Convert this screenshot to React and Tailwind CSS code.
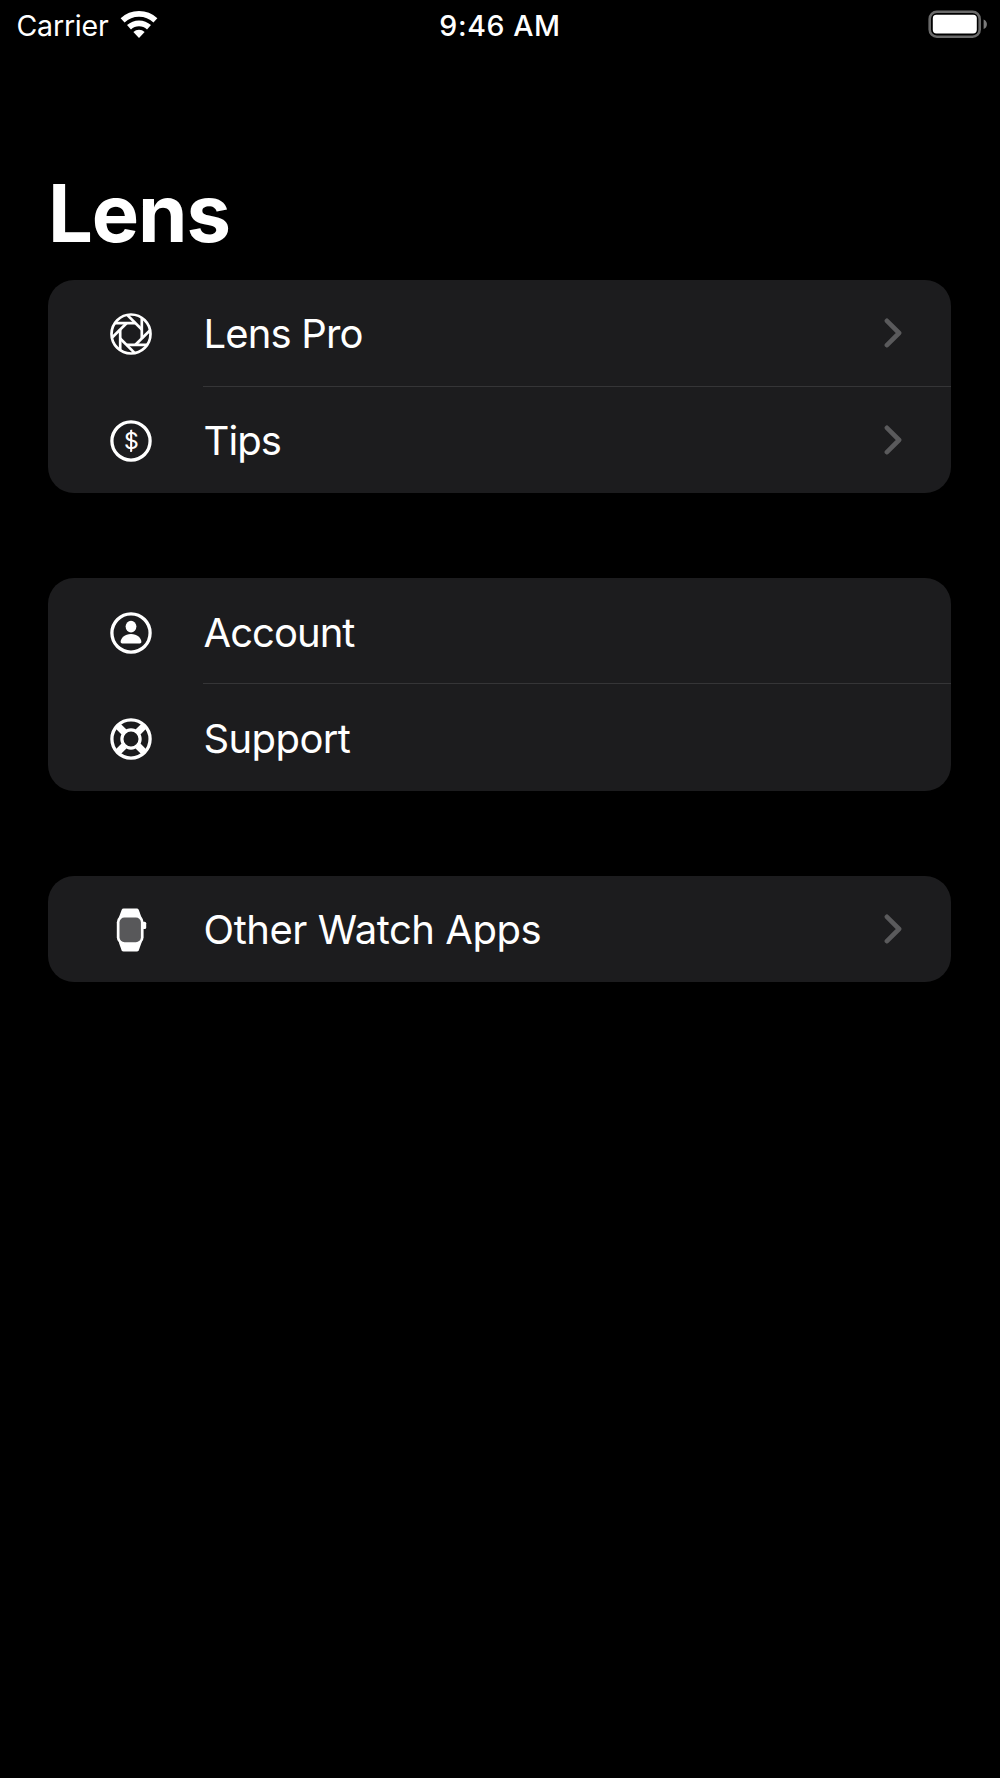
const svgProps = {
  viewBox: '-32 -32 64 64',
  className: 'w-16 h-16 shrink-0',
  fill: 'none',
};

function ApertureIcon() {
  const blades = [0, 45, 90, 135, 180, 225, 270, 315];
  return (
    <svg {...svgProps} stroke="#fff" strokeWidth="2.7">
      <circle r="19.5" />
      {blades.map((deg) => (
        <path key={deg} d="M-16.2 -10.8H4.5" transform={`rotate(${deg})`} />
      ))}
    </svg>
  );
}

function DollarIcon() {
  return (
    <svg {...svgProps}>
      <circle r="19.1" stroke="#fff" strokeWidth="3.3" />
      <text y="8.2" textAnchor="middle" fill="#fff" fontSize="23" fontFamily="Inter, sans-serif">
        $
      </text>
      <path d="M0 -11V11" stroke="#fff" strokeWidth="1.6" />
    </svg>
  );
}

function PersonIcon() {
  return (
    <svg {...svgProps}>
      <circle r="19.1" stroke="#fff" strokeWidth="3.3" />
      <ellipse cy="-6.4" rx="5.4" ry="5.9" fill="#fff" />
      <path d="M-10.4 9C-10.4 5.2 -6.2 1 0 1S10.4 5.2 10.4 9Q10.4 10.4 8.8 10.4H-8.8Q-10.4 10.4 -10.4 9Z" fill="#fff" />
    </svg>
  );
}

function SupportIcon() {
  return (
    <svg {...svgProps} stroke="#fff">
      <circle r="19.1" strokeWidth="3.3" />
      <circle r="9.1" strokeWidth="3.2" />
      <path d="M-7 -7L-13.4 -13.4M7 -7L13.4 -13.4M-7 7L-13.4 13.4M7 7L13.4 13.4" strokeWidth="7" />
    </svg>
  );
}

function WatchIcon() {
  return (
    <svg {...svgProps}>
      <path
        d="M-7.4 -21.4H5.8Q7.2 -21.4 7.8 -20L10.4 -13V13L7.8 20.2Q7.2 21.6 5.8 21.6H-7.4Q-8.8 21.6 -9.4 20.2L-12 13V-13L-9.4 -20Q-8.8 -21.4 -7.4 -21.4Z"
        fill="#fff"
      />
      <rect x="-14.2" y="-15.2" width="26.8" height="30" rx="7.5" fill="#fff" />
      <rect x="11.2" y="-8.2" width="4" height="7.2" rx="1.5" fill="#fff" />
      <rect x="-11.5" y="-12.5" width="21.4" height="24.8" rx="5" fill="#58585a" />
    </svg>
  );
}

function Chevron() {
  return (
    <svg viewBox="0 0 18 30" className="w-[18px] h-[30px] ml-auto mr-[49.5px] -mt-px" fill="none">
      <path d="M2.9 2.8L15.1 15L2.9 27.2" stroke="#5a5a5c" strokeWidth="4.6" strokeLinecap="round" strokeLinejoin="round" />
    </svg>
  );
}

function Row({ icon, label, chevron, className = '' }) {
  return (
    <div className={`flex items-center h-[106.2px] pl-[51px] ${className}`}>
      {icon}
      <span className="ml-[40.5px] text-[40px] leading-[48px] text-white">{label}</span>
      {chevron && <Chevron />}
    </div>
  );
}

function Card({ children }) {
  return <div className="rounded-[26px] bg-[#1c1c1e] overflow-hidden">{children}</div>;
}

function Divider() {
  return <div className="h-px -mt-px ml-[155px] bg-[#353537]" />;
}

function StatusBar() {
  return (
    <div className="grid grid-cols-3 items-center h-[50px] text-white">
      <div className="flex items-center pl-[16.5px]">
        <span className="pt-px text-[28.5px] leading-[34px] tracking-[-0.2px]">Carrier</span>
        {/* Wi-Fi */}
        <svg viewBox="-19 -28 38 30" className="w-[38px] h-[30px] ml-[11px]" fill="none" stroke="#fff">
          <path d="M-16.4 -17.6A24.1 24.1 0 0 1 16.4 -17.6" strokeWidth="5.8" />
          <path d="M-10 -10.75A14.7 14.7 0 0 1 10 -10.75" strokeWidth="5.8" />
          <path d="M0 0L-5.6 -6A8.2 8.2 0 0 1 5.6 -6Z" fill="#fff" stroke="none" />
        </svg>
      </div>
      <span className="pt-px text-center text-[28.5px] leading-[34px] font-medium tracking-[0.6px]">9:46 AM</span>
      {/* Battery */}
      <svg viewBox="0 0 60 28" className="w-[60px] h-7 ml-auto mr-3 -mt-[2px]" fill="none">
        <rect x="1.7" y="1.7" width="50" height="25" rx="7.2" stroke="#6a6a6a" strokeWidth="2.6" />
        <rect x="4.8" y="4.8" width="44" height="18.6" rx="3.6" fill="#fff" />
        <path d="M55.6 9.4C60 11 60 17.4 55.6 19Z" fill="#7a7a7a" />
      </svg>
    </div>
  );
}

export default function App() {
  return (
    <div className="w-[1000px] h-[1778px] bg-black font-['Inter',sans-serif]">
      <StatusBar />
      <h1 className="pt-[115px] pl-[48px] text-[79.5px] leading-[96px] font-bold tracking-[-1.1px] text-white">Lens</h1>
      <div className="flex flex-col gap-[85.5px] mt-[19.4px] ml-[48px] mr-[49px]">
        <Card>
          <Row icon={<ApertureIcon />} label="Lens Pro" chevron className="pt-px tracking-[-0.85px]" />
          <Divider />
          <Row icon={<DollarIcon />} label="Tips" chevron className="pt-[2px] tracking-[-0.9px]" />
        </Card>
        <Card>
          <Row icon={<PersonIcon />} label="Account" className="pt-[3px] tracking-[-0.95px]" />
          <Divider />
          <Row icon={<SupportIcon />} label="Support" className="pt-[2px] tracking-[-0.6px]" />
        </Card>
        <Card>
          <Row icon={<WatchIcon />} label="Other Watch Apps" chevron className="pt-px tracking-[-0.45px]" />
        </Card>
      </div>
    </div>
  );
}
